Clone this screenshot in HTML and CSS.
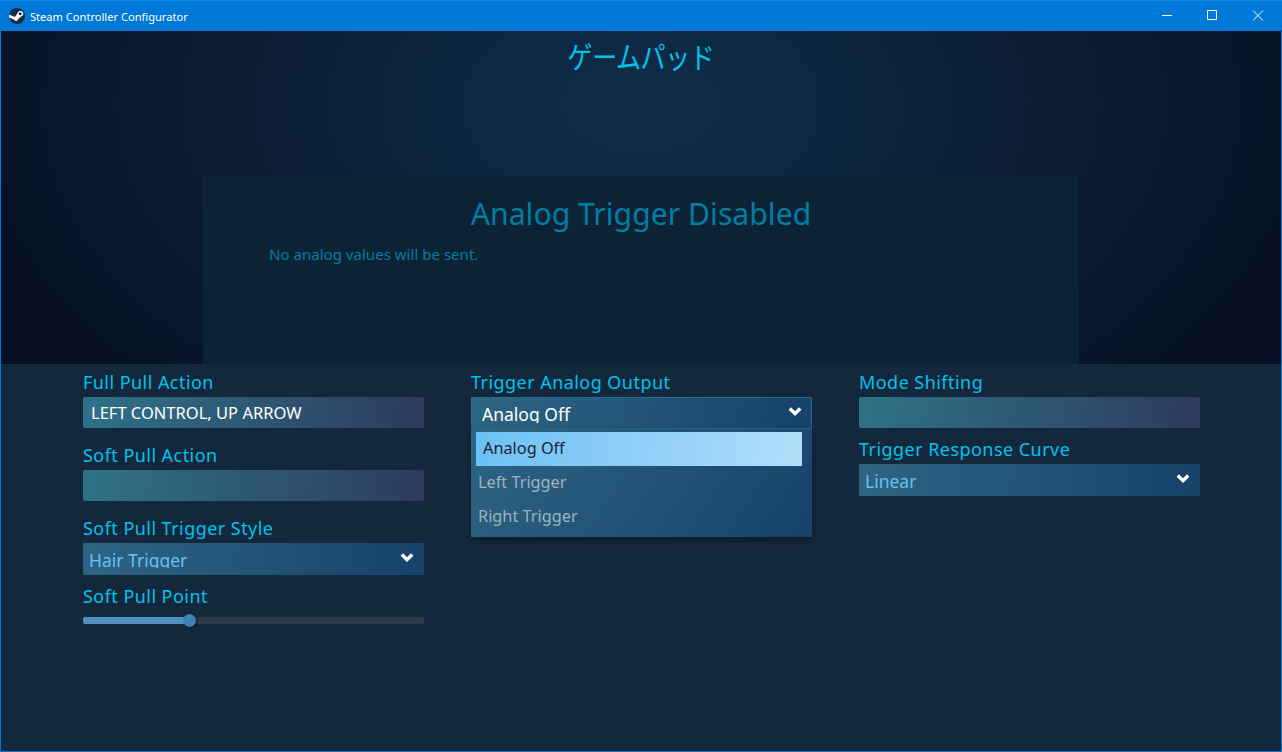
FILE: index.html
```html
<!DOCTYPE html>
<html lang="en">
<head>
  <meta charset="UTF-8" />
  <title>Steam Controller Configurator</title>
  <link rel="stylesheet" href="styles.css">
</head>
<body>
  <div class="window">
    <header class="titlebar">
      <svg class="app-icon" viewBox="0 0 16 16" aria-hidden="true">
        <circle cx="8" cy="8" r="8" fill="#1b2a4a"/>
        <path d="M0 9.6 L5 11.6 A2.2 2.2 0 0 0 9.2 11 L12.2 8.6 A2.9 2.9 0 1 0 8.6 5 L6.7 8.2 A2.2 2.2 0 0 0 5.2 8.7 L0.2 6.6 Z" fill="#fff"/>
        <circle cx="11.2" cy="5.7" r="1.5" fill="#1b2a4a"/>
      </svg>
      <span class="app-title">Steam Controller Configurator</span>
      <div class="win-controls">
        <svg viewBox="0 0 46 30" aria-hidden="true"><path d="M18 14.5h10" stroke="#fff" fill="none"/></svg>
        <svg viewBox="0 0 46 30" aria-hidden="true"><path d="M17.5 9.5h9v9h-9z" stroke="#fff" fill="none"/></svg>
        <svg viewBox="0 0 46 30" aria-hidden="true"><path d="M17 9.5l10 10M27 9.5l-10 10" stroke="#fff" fill="none"/></svg>
      </div>
    </header>

    <section class="hero">
      <h1>ゲームパッド</h1>
      <div class="info-panel">
        <h2>Analog Trigger Disabled</h2>
        <p>No analog values will be sent.</p>
      </div>
    </section>

    <main class="settings">
      <div class="column">
        <div class="setting">
          <div class="label">Full Pull Action</div>
          <div class="binding">LEFT CONTROL, UP ARROW</div>
        </div>
        <div class="setting">
          <div class="label">Soft Pull Action</div>
          <div class="binding"></div>
        </div>
        <div class="setting">
          <div class="label">Soft Pull Trigger Style</div>
          <div class="select"><span>Hair Trigger</span>
            <svg class="chevron" viewBox="0 0 14 10" aria-hidden="true"><path d="M1.8 1.5l5.2 5.2 5.2-5.2" /></svg>
          </div>
        </div>
        <div class="setting slider-setting">
          <div class="label">Soft Pull Point</div>
          <div class="slider">
            <div class="slider-fill"></div>
            <div class="slider-thumb"></div>
          </div>
        </div>
      </div>

      <div class="column">
        <div class="setting">
          <div class="label">Trigger Analog Output</div>
          <div class="select open"><span>Analog Off</span>
            <svg class="chevron" viewBox="0 0 14 10" aria-hidden="true"><path d="M1.8 1.5l5.2 5.2 5.2-5.2" /></svg>
            <ul class="menu">
              <li class="active">Analog Off</li>
              <li>Left Trigger</li>
              <li>Right Trigger</li>
            </ul>
          </div>
        </div>
      </div>

      <div class="column">
        <div class="setting">
          <div class="label">Mode Shifting</div>
          <div class="binding"></div>
        </div>
        <div class="setting tight">
          <div class="label">Trigger Response Curve</div>
          <div class="select"><span>Linear</span>
            <svg class="chevron" viewBox="0 0 14 10" aria-hidden="true"><path d="M1.8 1.5l5.2 5.2 5.2-5.2" /></svg>
          </div>
        </div>
      </div>
    </main>
  </div>
</body>
</html>
```

FILE: styles.css
```css
:root {
  --win-blue: #0078d7;
  --page-bg: #14283d;
  --label: #00c3ec;
  --font: 'Noto Sans', 'Noto Sans CJK JP', sans-serif;
}
*, *::before, *::after { box-sizing: border-box; }
html, body { height: 100%; }
body {
  margin: 0;
  font-family: var(--font);
  background: var(--page-bg);
  overflow: hidden;
}
.window {
  height: 752px;
  display: flex; flex-direction: column;
  border: 1px solid var(--win-blue);
  border-top: 0;
}
.titlebar {
  height: 31px; flex: none;
  margin: 0 -1px;
  background: var(--win-blue);
  border-top: 1px solid #1b86dc;
  display: flex; align-items: center;
  padding-left: 9px;
  color: #fff;
}
.app-icon { width: 16px; height: 16px; margin-top: -1px; }
.app-title { margin-left: 5px; font-size: 11.1px; }
.win-controls { margin-left: auto; display: flex; }
.win-controls svg { width: 46px; height: 30px; display: block; }

.hero {
  height: 333px; flex: none;
  background: radial-gradient(ellipse 720px 440px at 50% 22%, #0f2c48 0%, #0d2640 30%, #0b1b30 62%, #070f22 100%);
  display: flex; flex-direction: column; align-items: center;
}
.hero h1 {
  margin: 0; height: 42px;
  padding-top: 5px;
  font-size: 25px; font-weight: 400; line-height: 30px;
  letter-spacing: -.4px;
  color: var(--label);
  font-family: 'Noto Sans CJK JP', sans-serif;
  transform: scaleY(1.18);
  transform-origin: top;
}
.info-panel {
  width: 876px; margin-top: 103px; flex: 1;
  background: #0c2235;
  color: #007ea6;
  padding: 0 66px;
}
.info-panel h2 {
  margin: 18px 0 0; text-align: center;
  font-size: 30.2px; font-weight: 400; line-height: 40px;
}
.info-panel p {
  margin: 10px 0 0;
  font-size: 15px; line-height: 20px;
  letter-spacing: .03px;
}

.settings {
  flex: 1;
  display: flex; gap: 47px;
  padding: 6px 0 0 82px;
}
.column { width: 341px; display: flex; flex-direction: column; }
.setting { margin-bottom: 15px; }
.setting.tight { margin-bottom: 0; margin-top: -6px; }
.label {
  font-size: 18px; line-height: 24px; height: 27px;
  letter-spacing: .45px;
  color: var(--label);
}
.binding {
  height: 31px;
  background: linear-gradient(95deg, #2f7288 0%, #2d3b5e 100%);
  border-radius: 2px;
  padding-left: 8px;
  font-size: 16.5px; line-height: 31px;
  color: #fff;
}
.select {
  position: relative;
  height: 32px;
  background: linear-gradient(95deg, #2e6583 0%, #17426a 100%);
  border-radius: 1px;
  padding-left: 6px;
  font-size: 17.5px; line-height: 35px;
  color: #67c1f5;
}
.select span { display: block; height: 25px; overflow: hidden; }
.select.open {
  padding-left: 10px;
  color: #fff;
  border: 1px solid #2b6c88;
  line-height: 33px;
}
.chevron {
  position: absolute; right: 10px; top: 10px;
  width: 14px; height: 10px;
}
.open .chevron { right: 9px; top: 9px; }
.chevron path { fill: none; stroke: #fff; stroke-width: 3.4; }
.menu {
  position: absolute; left: -1px; right: -1px; top: 31px;
  margin: 0; padding: 3px 0;
  list-style: none;
  background: linear-gradient(125deg, #2e6583 0%, #17426a 100%);
  box-shadow: 0 3px 8px rgba(0,0,0,.35);
  font-size: 16.3px; line-height: 32px;
}
.menu li { height: 34px; padding-left: 7px; color: #9fb2c2; }
.menu li.active {
  margin: 0 10px 0 5px;
  padding-left: 7px;
  color: #1a2433;
  background: linear-gradient(95deg, #6cc0f5 0%, #b2defa 100%);
}
.slider-setting { margin-top: -6px; }
.slider {
  position: relative; margin-top: 6px;
  height: 7px; border-radius: 2px;
  background: #2a3a47;
}
.slider-fill { width: 106px; height: 100%; border-radius: 2px 0 0 2px; background: #5193be; }
.slider-thumb {
  position: absolute; left: 100px; top: -3px;
  width: 13px; height: 13px; border-radius: 50%;
  background: #3d82b5;
  box-shadow: 1px 1px 2px rgba(0,0,0,.5);
}
```
